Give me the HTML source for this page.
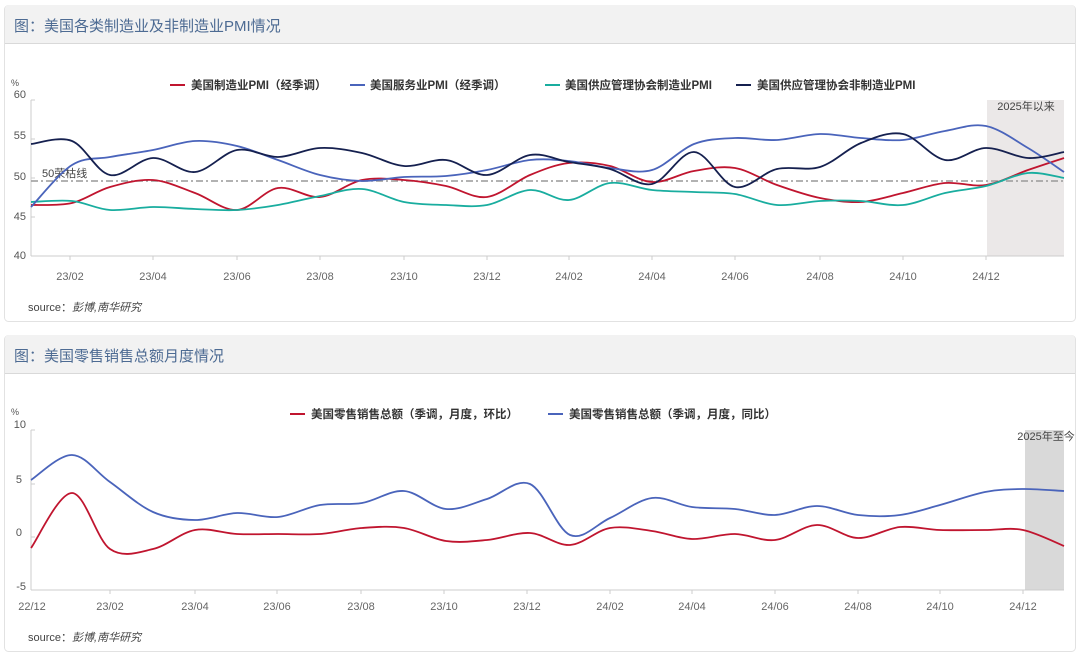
<!DOCTYPE html>
<html><head><meta charset="utf-8">
<style>
html,body{margin:0;padding:0;background:#fff;width:1080px;height:656px;overflow:hidden}
svg{display:block}
text{font-family:"Liberation Sans","Noto Sans CJK SC",sans-serif}
</style></head><body>
<svg id="s" width="1080" height="656" viewBox="0 0 1080 656" xmlns="http://www.w3.org/2000/svg">
<!-- panel 1 -->
<rect x="4.5" y="5.5" width="1071" height="316" rx="4" fill="#fff" stroke="#e2e2e2"/>
<path d="M5 9 a4 4 0 0 1 4-4 H1071 a4 4 0 0 1 4 4 V43 H5Z" fill="#f2f2f2"/>
<line x1="5" y1="43.5" x2="1075" y2="43.5" stroke="#d9d9d9"/>
<text x="14" y="31" font-size="15" fill="#4d6b93">图：美国各类制造业及非制造业PMI情况</text>
<text x="11" y="86" font-size="9" fill="#555">%</text>
<g font-size="11" fill="#555" text-anchor="end">
<text x="26" y="98">60</text><text x="26" y="139">55</text><text x="26" y="180">50</text><text x="26" y="220">45</text><text x="26" y="259">40</text></g>
<rect x="987" y="100" width="77" height="156" fill="#ebe8e8"/>
<text x="1026" y="110" font-size="11" fill="#444" text-anchor="middle">2025年以来</text>
<line x1="31" y1="100" x2="31" y2="256" stroke="#ccc"/>
<line x1="31" y1="256" x2="1064" y2="256" stroke="#ccc"/>
<g stroke="#ccc"><line x1="31" y1="100" x2="35" y2="100"/><line x1="31" y1="139" x2="35" y2="139"/><line x1="31" y1="178" x2="35" y2="178"/><line x1="31" y1="217" x2="35" y2="217"/></g>
<g font-size="11" fill="#666" text-anchor="middle" id="xl1"></g>
<line x1="31" y1="181" x2="1064" y2="181" stroke="#999" stroke-width="1.5" stroke-dasharray="7,3,2,3"/>
<text x="42" y="177" font-size="11" fill="#444">50荣枯线</text>
<g font-size="11.5" font-weight="bold" fill="#333">
<line x1="170" y1="85" x2="185" y2="85" stroke="#c0152f" stroke-width="2"/><text x="191" y="89">美国制造业PMI（经季调）</text>
<line x1="350" y1="85" x2="365" y2="85" stroke="#4a64bb" stroke-width="2"/><text x="370" y="89">美国服务业PMI（经季调）</text>
<line x1="545" y1="85" x2="560" y2="85" stroke="#19ad9f" stroke-width="2"/><text x="565" y="89">美国供应管理协会制造业PMI</text>
<line x1="736" y1="85" x2="751" y2="85" stroke="#15204f" stroke-width="2"/><text x="757" y="89">美国供应管理协会非制造业PMI</text>
</g>
<g id="l1" fill="none" stroke-width="1.8"></g>
<text x="28" y="311" font-size="11" fill="#444">source：<tspan font-style="italic">彭博,南华研究</tspan></text>

<!-- panel 2 -->
<rect x="4.5" y="335.5" width="1071" height="316" rx="4" fill="#fff" stroke="#e2e2e2"/>
<path d="M5 339 a4 4 0 0 1 4-4 H1071 a4 4 0 0 1 4 4 V373 H5Z" fill="#f2f2f2"/>
<line x1="5" y1="373.5" x2="1075" y2="373.5" stroke="#d9d9d9"/>
<text x="14" y="361" font-size="15" fill="#4d6b93">图：美国零售销售总额月度情况</text>
<text x="11" y="415" font-size="9" fill="#555">%</text>
<g font-size="11" fill="#555" text-anchor="end">
<text x="26" y="428">10</text><text x="22" y="483">5</text><text x="22" y="536">0</text><text x="26" y="590">-5</text></g>
<rect x="1025" y="430" width="39" height="160" fill="#d9d9d9"/>
<text x="1046" y="440" font-size="11" fill="#444" text-anchor="middle">2025年至今</text>
<line x1="31" y1="430" x2="31" y2="590" stroke="#ccc"/>
<line x1="31" y1="590" x2="1064" y2="590" stroke="#ccc"/>
<g stroke="#ccc"><line x1="31" y1="430" x2="35" y2="430"/><line x1="31" y1="484" x2="35" y2="484"/><line x1="31" y1="537" x2="35" y2="537"/></g>
<g font-size="11" fill="#666" text-anchor="middle" id="xl2"></g>
<g font-size="11.5" font-weight="bold" fill="#333">
<line x1="290" y1="414" x2="305" y2="414" stroke="#c0152f" stroke-width="2"/><text x="311" y="418">美国零售销售总额（季调，月度，环比）</text>
<line x1="548" y1="414" x2="563" y2="414" stroke="#4a64bb" stroke-width="2"/><text x="569" y="418">美国零售销售总额（季调，月度，同比）</text>
</g>
<g id="l2" fill="none" stroke-width="1.8"></g>
<text x="28" y="641" font-size="11" fill="#444">source：<tspan font-style="italic">彭博,南华研究</tspan></text>
</svg>
<script>
var NS="http://www.w3.org/2000/svg";
function el(p,t,a,txt){var e=document.createElementNS(NS,t);for(var k in a)e.setAttribute(k,a[k]);if(txt)e.textContent=txt;document.getElementById(p).appendChild(e);}
function cr(pts){var d="M"+pts[0][0]+" "+pts[0][1];for(var i=0;i<pts.length-1;i++){var p0=pts[i-1]||pts[i],p1=pts[i],p2=pts[i+1],p3=pts[i+2]||p2;var t=6;
d+=" C"+(p1[0]+(p2[0]-p0[0])/t).toFixed(1)+" "+(p1[1]+(p2[1]-p0[1])/t).toFixed(1)+" "+(p2[0]-(p3[0]-p1[0])/t).toFixed(1)+" "+(p2[1]-(p3[1]-p1[1])/t).toFixed(1)+" "+p2[0]+" "+p2[1];}return d;}
function mk(xs,ys){return xs.map(function(x,i){return [x,ys[i]];});}
var X1=[31,72,110,153,195,237,278,320,362,404,446,487,530,569,610,652,694,735,777,820,861,903,945,986,1028,1064];
var s1=[
["#c0152f",[205,203,187,180,193,210,188,197,180,180,186,197,175,163,166,182,171,168,185,198,202,193,183,185,170,158]],
["#19ad9f",[202,201,210,207,209,210,205,196,189,202,205,205,190,200,183,190,192,194,205,201,201,205,193,186,173,178]],
["#4a64bb",[207,165,157,150,141,146,160,175,181,177,176,170,160,161,168,170,144,138,140,134,138,140,131,126,148,172]],
["#15204f",[144,141,175,158,172,150,157,148,153,166,160,175,155,162,169,184,152,187,169,167,143,134,160,148,158,152]]];
s1.forEach(function(s){el("l1","path",{d:cr(mk(X1,s[1])),stroke:s[0]});});
var L1=["23/02","23/04","23/06","23/08","23/10","23/12","24/02","24/04","24/06","24/08","24/10","24/12"],P1=[70,153,237,320,404,487,569,652,735,820,903,986];
P1.forEach(function(x,i){el("xl1","text",{x:x,y:280},L1[i]);el("l1","line",{x1:x,y1:256,x2:x,y2:260,stroke:"#ccc","stroke-width":1});});
var X2=[31,72,110,153,195,237,278,320,362,404,446,487,530,570,610,652,692,735,775,817,858,900,940,985,1023,1064];
var s2=[
["#4a64bb",[480,455,482,512,520,513,517,505,503,491,509,499,484,535,518,498,507,509,515,506,515,515,505,492,489,491]],
["#c0152f",[548,493,549,549,530,534,534,534,528,528,541,540,533,545,528,531,539,534,540,525,538,527,530,530,530,546]]];
s2.forEach(function(s){el("l2","path",{d:cr(mk(X2,s[1])),stroke:s[0]});});
var L2=["22/12","23/02","23/04","23/06","23/08","23/10","23/12","24/02","24/04","24/06","24/08","24/10","24/12"],P2=[32,110,195,277,361,444,527,610,692,775,858,940,1023];
P2.forEach(function(x,i){el("xl2","text",{x:x,y:610},L2[i]);if(i>0)el("l2","line",{x1:x,y1:590,x2:x,y2:594,stroke:"#ccc","stroke-width":1});});
</script>
</body></html>
